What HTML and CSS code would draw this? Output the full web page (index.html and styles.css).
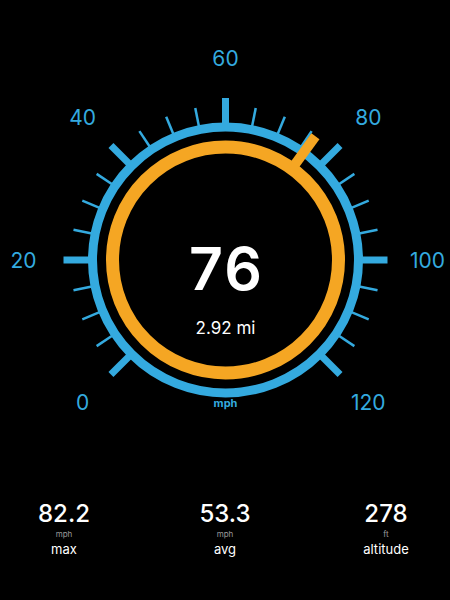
FILE: index.html
```html
<!DOCTYPE html>
<html lang="en">
<head>
  <meta charset="UTF-8" />
  <meta name="viewport" content="width=device-width, initial-scale=1.0"/>
  <title>Speedometer</title>
  <link rel="stylesheet" href="styles.css">
</head>
<body>
  <div class="screen">
    <svg class="gauge" width="450" height="440" viewBox="0 0 450 440">
      <g transform="translate(225.5 260)">
        <!-- outer blue ring -->
        <circle class="ring" r="133" />

        <!-- minor ticks every 5 mph -->
        <g class="tick-minor">
          <line y1="-135" y2="-155" transform="rotate(-123.75)" />
          <line y1="-135" y2="-155" transform="rotate(-112.5)" />
          <line y1="-135" y2="-155" transform="rotate(-101.25)" />
          <line y1="-135" y2="-155" transform="rotate(-78.75)" />
          <line y1="-135" y2="-155" transform="rotate(-67.5)" />
          <line y1="-135" y2="-155" transform="rotate(-56.25)" />
          <line y1="-135" y2="-155" transform="rotate(-33.75)" />
          <line y1="-135" y2="-155" transform="rotate(-22.5)" />
          <line y1="-135" y2="-155" transform="rotate(-11.25)" />
          <line y1="-135" y2="-155" transform="rotate(11.25)" />
          <line y1="-135" y2="-155" transform="rotate(22.5)" />
          <line y1="-135" y2="-155" transform="rotate(33.75)" />
          <line y1="-135" y2="-155" transform="rotate(56.25)" />
          <line y1="-135" y2="-155" transform="rotate(67.5)" />
          <line y1="-135" y2="-155" transform="rotate(78.75)" />
          <line y1="-135" y2="-155" transform="rotate(101.25)" />
          <line y1="-135" y2="-155" transform="rotate(112.5)" />
          <line y1="-135" y2="-155" transform="rotate(123.75)" />
        </g>

        <!-- major ticks every 20 mph -->
        <g class="tick-major">
          <line y1="-133" y2="-162" transform="rotate(-135)" />
          <line y1="-133" y2="-162" transform="rotate(-90)" />
          <line y1="-133" y2="-162" transform="rotate(-45)" />
          <line y1="-133" y2="-162" />
          <line y1="-133" y2="-162" transform="rotate(45)" />
          <line y1="-133" y2="-162" transform="rotate(90)" />
          <line y1="-133" y2="-162" transform="rotate(135)" />
        </g>

        <g class="scale">
          <text x="-142.8" y="142.8">0</text>
          <text x="-202" y="0">20</text>
          <text x="-142.8" y="-142.8">40</text>
          <text x="0" y="-202">60</text>
          <text x="142.8" y="-142.8">80</text>
          <text x="202" y="0">100</text>
          <text x="142.8" y="142.8">120</text>
        </g>
        <text class="unit" x="0" y="147">mph</text>

        <!-- current speed -->
        <circle class="track" r="113" />
        <line class="needle" y1="-113" y2="-153" transform="rotate(36)" />

        <text class="speed" x="1" y="30">76</text>
        <text class="distance" x="0" y="74">2.92 mi</text>
      </g>
    </svg>

    <div class="stats">
      <div class="stat">
        <span class="value">82.2</span>
        <span class="small">mph</span>
        <span class="label">max</span>
      </div>
      <div class="stat">
        <span class="value">53.3</span>
        <span class="small">mph</span>
        <span class="label">avg</span>
      </div>
      <div class="stat">
        <span class="value">278</span>
        <span class="small">ft</span>
        <span class="label">altitude</span>
      </div>
    </div>
  </div>
</body>
</html>
```

FILE: styles.css
```css
:root {
  --negro: #000000;
  --azul: #34aadf;
  --naranja: #f5a623;
  --blanco: #ffffff;
  --gris: #9a9a9a;
}

body {
  margin: 0;
  padding: 0;
  background: var(--negro);
  font-family: Inter, 'Noto Sans', sans-serif;
  color: var(--blanco);
}

.screen {
  width: 450px;
  height: 600px;
  display: flex;
  flex-direction: column;
}

.gauge {
  display: block;
}

.ring {
  fill: none;
  stroke: var(--azul);
  stroke-width: 9;
}

.tick-minor line {
  stroke: var(--azul);
  stroke-width: 2.5;
}

.tick-major line {
  stroke: var(--azul);
  stroke-width: 7;
}

.scale text {
  fill: var(--azul);
  font-size: 21px;
  text-anchor: middle;
  dominant-baseline: central;
}

.unit {
  fill: var(--azul);
  font-size: 11px;
  font-weight: 700;
  text-anchor: middle;
}

.track {
  fill: none;
  stroke: var(--naranja);
  stroke-width: 13;
}

.needle {
  stroke: var(--naranja);
  stroke-width: 10;
}

.speed {
  fill: var(--blanco);
  font-size: 59px;
  font-weight: 600;
  letter-spacing: 2px;
  text-anchor: middle;
}

.distance {
  fill: var(--blanco);
  font-size: 17px;
  text-anchor: middle;
}

.stats {
  display: grid;
  grid-template-columns: repeat(3, 130px);
  column-gap: 31px;
  justify-content: center;
  margin-top: 60px;
}

.stat {
  display: flex;
  flex-direction: column;
  align-items: center;
}

.value {
  font-size: 24px;
  font-weight: 500;
  line-height: 28px;
}

.small {
  font-size: 8px;
  color: var(--gris);
  line-height: 12px;
}

.label {
  font-size: 13px;
  line-height: 18px;
}
```
